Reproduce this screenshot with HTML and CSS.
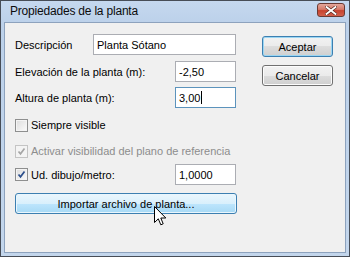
FILE: index.html
```html
<!DOCTYPE html>
<html lang="es">
<head>
<meta charset="utf-8">
<title>Propiedades de la planta</title>
<link rel="stylesheet" href="styles.css">
</head>
<body>
<div class="window">
  <div class="titlebar">
    <span class="title">Propiedades de la planta</span>
    <span class="close">
      <svg width="12" height="9" viewBox="0 0 12 9"><path d="M1.5 1 L10.5 8 M10.5 1 L1.5 8" stroke="#5a2a22" stroke-width="3.2" stroke-linecap="square"/><path d="M1.5 1 L10.5 8 M10.5 1 L1.5 8" stroke="#ffffff" stroke-width="1.8" stroke-linecap="square"/></svg>
    </span>
  </div>
  <div class="client">
    <div class="form">
      <div class="row r-desc"><span class="label">Descripción</span><div class="field wide">Planta Sótano</div></div>
      <div class="row r-elev"><span class="label">Elevación de la planta (m):</span><div class="field">-2,50</div></div>
      <div class="row r-alt"><span class="label">Altura de planta (m):</span><div class="field focus">3,00<span class="caret"></span></div></div>
      <div class="check r-chk1"><span class="box"></span><span>Siempre visible</span></div>
      <div class="check disabled r-chk2"><span class="box"><svg width="11" height="11" viewBox="0 0 11 11"><path d="M2.5 5.5 L4.5 7.8 L8.5 2.5" fill="none" stroke="#a6a6a6" stroke-width="1.7"/></svg></span><span>Activar visibilidad del plano de referencia</span></div>
      <div class="row r-ud"><div class="check"><span class="box"><svg width="11" height="11" viewBox="0 0 11 11"><path d="M2.5 5.5 L4.5 7.8 L8.5 2.5" fill="none" stroke="#2c4f8c" stroke-width="1.7"/></svg></span><span>Ud. dibujo/metro:</span></div><div class="field">1,0000</div></div>
      <div class="btn import hover">Importar archivo de planta...</div>
    </div>
    <div class="actions">
      <div class="btn default">Aceptar</div>
      <div class="btn">Cancelar</div>
    </div>
  </div>
  <svg class="cursor" width="13" height="21" viewBox="0 0 13 21"><path d="M0.5 0.5 L0.5 16.5 L4.3 12.8 L6.8 18.8 L9.2 17.8 L6.8 12 L11.8 12 Z" fill="#ffffff" stroke="#000000" stroke-width="1" stroke-linejoin="miter"/></svg>
</div>
</body>
</html>
```
FILE: styles.css
```css
html, body {
  margin: 0;
  padding: 0;
  background: #ffffff;
}
body {
  font-family: "Liberation Sans", Arial, sans-serif;
  font-size: 11px;
  color: #000000;
}
.window {
  position: relative;
  width: 350px;
  height: 257px;
  box-sizing: border-box;
  border: 1px solid #474d57;
  background: linear-gradient(#c5d8ef, #bcd1ea 22px, #c3d6ec);
  padding: 0 3px 3px 3px;
  display: flex;
  flex-direction: column;
}
.titlebar {
  height: 21px;
  display: flex;
  align-items: center;
  justify-content: space-between;
  padding-left: 6px;
}
.title {
  font-size: 12px;
  color: #0c0c0c;
  letter-spacing: -0.2px;
  margin-top: -1px;
}
.close {
  width: 28px;
  height: 14px;
  margin-right: 1px;
  margin-top: -3px;
  box-sizing: border-box;
  border: 1px solid #6b3a33;
  border-radius: 3px;
  background: linear-gradient(#e4a89c, #d77a69 45%, #c7432f 55%, #d2604c);
  display: flex;
  align-items: center;
  justify-content: center;
}
.client {
  flex: 1;
  background: #f0f0f0;
  border: 1px solid #8da2bd;
  display: flex;
  align-items: flex-start;
}
.form {
  width: 221px;
  margin-left: 10px;
  padding-top: 11px;
  display: flex;
  flex-direction: column;
  gap: 5px;
}
.row {
  height: 21px;
  display: flex;
  align-items: center;
  justify-content: space-between;
}
.r-elev { margin-top: 1px; }
.r-chk1 { margin-top: 4px; }
.r-chk2 { margin-top: 5px; }
.r-ud { margin-top: 0; }
.import { margin-top: 3px; }
.field {
  width: 61px;
  height: 21px;
  box-sizing: border-box;
  background: #ffffff;
  border: 1px solid #abadb3;
  border-top-color: #abadb3;
  padding: 0 3px;
  display: flex;
  align-items: center;
}
.field.wide { width: 143px; }
.field.focus { border-color: #5c93bc; }
.caret {
  display: inline-block;
  width: 1px;
  height: 13px;
  background: #000000;
  margin-left: 1px;
}
.check {
  height: 16px;
  display: flex;
  align-items: center;
  gap: 3px;
}
.box {
  width: 13px;
  height: 13px;
  box-sizing: border-box;
  border: 1px solid #8e8f8f;
  background: linear-gradient(135deg, #dcdcdc, #fbfbfb);
  box-shadow: inset 0 0 0 1px #f4f4f4;
  display: flex;
  align-items: center;
  justify-content: center;
}
.disabled { color: #8d8d8d; }
.disabled .box {
  border-color: #c4c4c4;
  background: #f4f4f4;
}
.btn {
  box-sizing: border-box;
  height: 21px;
  border: 1px solid #707070;
  border-radius: 3px;
  background: linear-gradient(#f2f2f2, #ebebeb 50%, #dddddd 50%, #cfcfcf);
  box-shadow: inset 0 0 0 1px #fcfcfc;
  display: flex;
  align-items: center;
  justify-content: center;
}
.btn.default {
  border-color: #3c7fb1;
  box-shadow: inset 0 0 0 1px #9ad6f3;
}
.btn.hover {
  border-color: #3c7fb1;
  background: linear-gradient(#eaf6fd, #d9f0fc 50%, #bee6fd 50%, #a7d9f5);
  box-shadow: inset 0 0 0 1px #e9f6fd;
}
.import { width: 222px; }
.actions {
  margin-left: 26px;
  margin-top: 13px;
  width: 71px;
  display: flex;
  flex-direction: column;
  gap: 8px;
}
.actions .btn { height: 21px; }
.cursor {
  position: absolute;
  left: 153px;
  top: 205px;
}
```
